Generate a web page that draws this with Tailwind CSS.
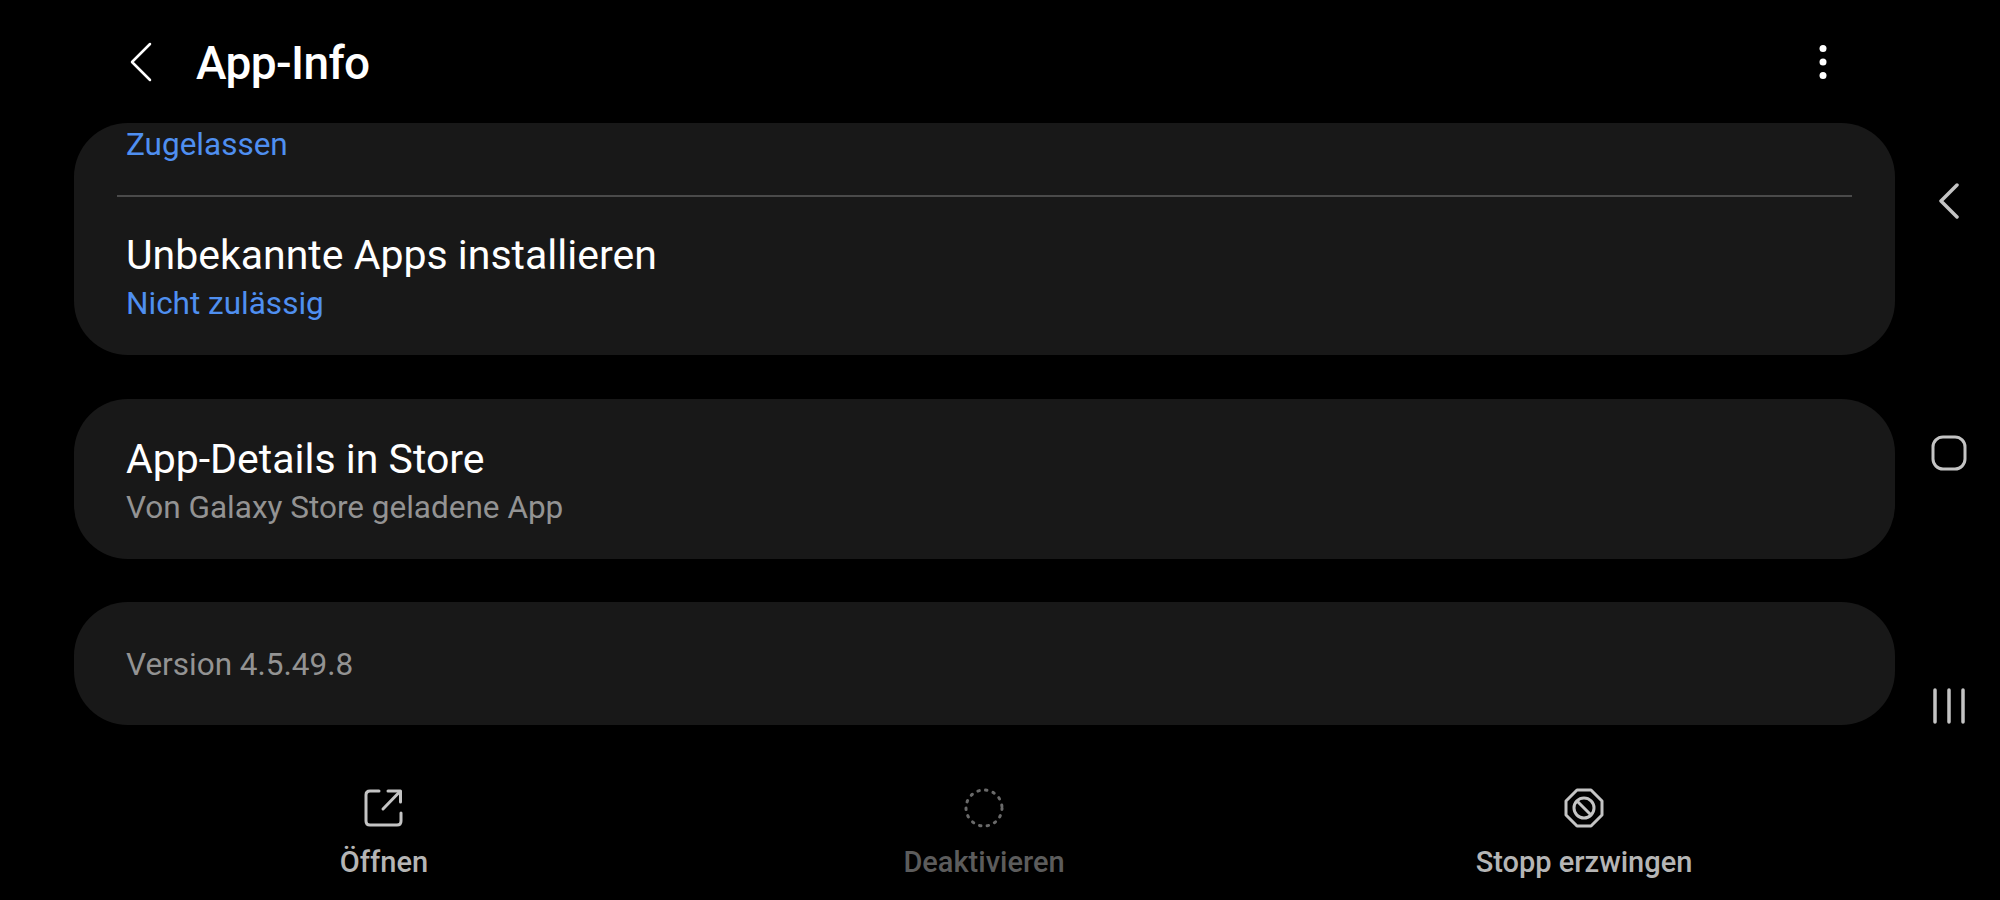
<!DOCTYPE html>
<html lang="de">
<head>
  <meta charset="UTF-8" />
  <title>App-Info</title>
  <script src="https://cdn.jsdelivr.net/npm/@tailwindcss/browser@4"></script>
</head>
<body class="bg-black w-[2000px] h-[900px] overflow-hidden flex font-['Roboto',sans-serif]">

  <div class="w-[1895px] flex flex-col">
    <!-- Header -->
    <div class="h-[123px] flex items-center pl-[130px] pr-[67px]">
      <svg class="w-[22px] h-[40px]" viewBox="0 0 22 40" fill="none" stroke="#fff" stroke-width="2.5" stroke-linecap="round" stroke-linejoin="round"><path d="M20 2 L2 20 L20 38"/></svg>
      <h1 class="ml-[44px] text-[46px] leading-[56px] font-medium text-white tracking-[-0.6px] pt-[2px]">App-Info</h1>
      <svg class="ml-auto w-[10px] h-[36px]" viewBox="0 0 10 36" fill="#fff"><circle cx="5" cy="4.5" r="3.5"/><circle cx="5" cy="18" r="3.5"/><circle cx="5" cy="31.5" r="3.5"/></svg>
    </div>

    <div class="pl-[74px] flex flex-col">
      <!-- Permissions card, scrolled -->
      <div class="h-[232px] bg-[#181818] rounded-[54px] flex flex-col">
        <div class="h-[72px] px-[52px] pt-[3px]">
          <p class="text-[31.5px] leading-[38px] text-[#4f8ff0]">Zugelassen</p>
        </div>
        <div class="mx-[43px] h-[2px] bg-[#4a4a4a]"></div>
        <div class="px-[52px] pt-[34px]">
          <p class="text-[41px] leading-[48px] text-white">Unbekannte Apps installieren</p>
          <p class="mt-[6px] text-[31.5px] leading-[38px] text-[#4f8ff0]">Nicht zulässig</p>
        </div>
      </div>

      <!-- Store card -->
      <div class="mt-[44px] h-[160px] bg-[#181818] rounded-[54px] px-[52px] pt-[4px] flex flex-col justify-center">
        <p class="text-[41px] leading-[48px] text-white">App-Details in Store</p>
        <p class="mt-[6px] text-[31.5px] leading-[38px] text-[#939393]">Von Galaxy Store geladene App</p>
      </div>

      <!-- Version card -->
      <div class="mt-[43px] h-[123px] bg-[#181818] rounded-[54px] px-[52px] pt-[3px] flex items-center">
        <p class="text-[31.5px] leading-[38px] text-[#939393]">Version 4.5.49.8</p>
      </div>
    </div>

    <!-- Bottom actions -->
    <div class="pl-[84px] pr-[11px] grid grid-cols-3 pt-[63px]">
      <div class="flex flex-col items-center">
        <svg class="w-[40px] h-[40px]" viewBox="0 0 40 40" fill="none" stroke="#c4c4c4" stroke-width="3" stroke-linecap="round" stroke-linejoin="round"><path d="M15 3 H6 Q2 3 2 7 V33 Q2 37 6 37 H33 Q37 37 37 33 V25"/><path d="M24 3 H36.5 V14"/><path d="M35 4.5 L19 21"/></svg>
        <p class="mt-[16px] text-[29px] leading-[36px] font-medium text-[#b5b5b5]">Öffnen</p>
      </div>
      <div class="flex flex-col items-center">
        <svg class="w-[40px] h-[40px]" viewBox="0 0 40 40" fill="none" stroke="#6a6a6a" stroke-width="3" stroke-linecap="round" stroke-dasharray="1.5 6.3"><circle cx="20" cy="20" r="18"/></svg>
        <p class="mt-[16px] text-[29px] leading-[36px] font-medium text-[#5c5c5c]">Deaktivieren</p>
      </div>
      <div class="flex flex-col items-center">
        <svg class="w-[40px] h-[40px]" viewBox="0 0 40 40" fill="none" stroke="#c4c4c4" stroke-width="3" stroke-linejoin="round"><path d="M13 2 H27 L38 13 V27 L27 38 H13 L2 27 V13 Z"/><circle cx="20" cy="20" r="10"/><path d="M13.5 13.5 L26.5 26.5"/></svg>
        <p class="mt-[16px] text-[29px] leading-[36px] font-medium text-[#b5b5b5]">Stopp erzwingen</p>
      </div>
    </div>
  </div>

  <!-- Navigation rail -->
  <div class="flex-1 flex flex-col items-center pt-[183px] pl-[3px]">
    <svg class="w-[20px] h-[36px]" viewBox="0 0 20 36" fill="none" stroke="#c4c4c4" stroke-width="3.5" stroke-linecap="round" stroke-linejoin="round"><path d="M18 2 L2 18 L18 34"/></svg>
    <svg class="mt-[216px] w-[36px] h-[36px]" viewBox="0 0 36 36" fill="none" stroke="#c4c4c4" stroke-width="3"><rect x="2" y="2" width="32" height="32" rx="10"/></svg>
    <svg class="mt-[217px] w-[34px] h-[36px]" viewBox="0 0 34 36" fill="none" stroke="#c4c4c4" stroke-width="3.5" stroke-linecap="round"><path d="M3 2 V34 M17 2 V34 M31 2 V34"/></svg>
  </div>

</body>
</html>
